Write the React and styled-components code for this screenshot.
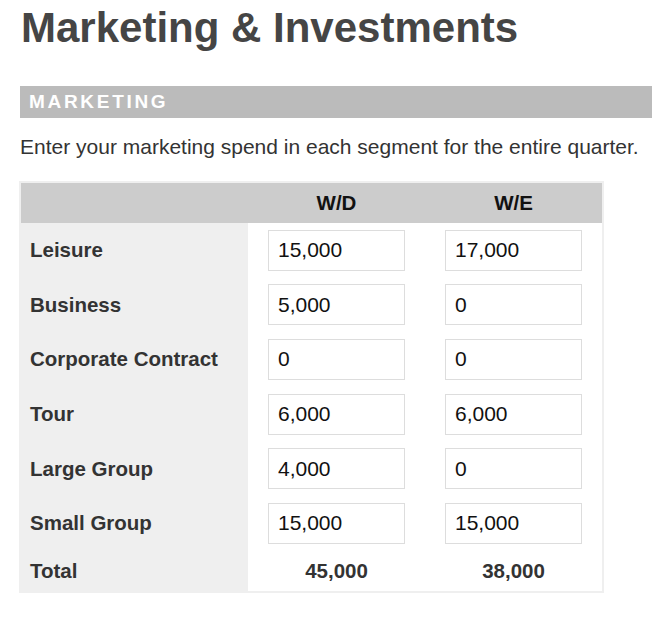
import React from 'react';
import styled, { createGlobalStyle } from 'styled-components';

// marketing spend page

const GlobalStyle = createGlobalStyle`
  html, body {
    margin: 0;
    padding: 0;
    background: #fff;
  }
  body {
    font-family: "Liberation Sans", Arial, Helvetica, sans-serif;
  }
`;

const Page = styled.div`
  padding: 3px 2px 24px 20px;
`;

const Title = styled.h1`
  margin: 0;
  font-size: 42px;
  line-height: 50px;
  font-weight: 700;
  color: #454545;
  padding-left: 1px;
`;

const SectionBar = styled.div`
  margin-top: 33px;
  height: 32px;
  line-height: 32px;
  background: #bbbbbb;
  color: #fff;
  font-size: 19px;
  font-weight: 700;
  letter-spacing: 2.7px;
  padding-left: 9px;
`;

const Intro = styled.p`
  margin: 17px 0 0;
  font-size: 21px;
  line-height: 24px;
  color: #333;
`;

const Grid = styled.div`
  display: grid;
  grid-template-columns: 227px 177px 177px;
  width: fit-content;
  margin: 22px 0 0 -1px;
  border: 2px solid #efefef;
`;

const HeadCell = styled.div`
  height: 40px;
  background: #cccccc;
  display: flex;
  align-items: center;
  justify-content: center;
  font-size: 20.5px;
  font-weight: 700;
  color: #111;
`;

const LabelCell = styled.div`
  height: ${(p) => (p.$total ? 40 : 54.6)}px;
  background: #efefef;
  display: flex;
  align-items: center;
  padding-left: 9px;
  font-size: 20.5px;
  font-weight: 700;
  color: #333;
`;

const ValueCell = styled.div`
  height: ${(p) => (p.$total ? 40 : 54.6)}px;
  display: flex;
  align-items: center;
  justify-content: center;
  font-size: 20.5px;
  font-weight: ${(p) => (p.$total ? 700 : 400)};
  color: #333;
`;

const Input = styled.input`
  box-sizing: border-box;
  width: 137px;
  height: 41px;
  border: 1px solid #dddddd;
  border-radius: 0;
  padding: 0 0 0 9px;
  margin: 0;
  font-family: "Liberation Sans", Arial, sans-serif;
  font-size: 21px;
  color: #111;
  background: #fff;
  outline: none;
`;

const rows = [
  { label: 'Leisure', wd: '15,000', we: '17,000' },
  { label: 'Business', wd: '5,000', we: '0' },
  { label: 'Corporate Contract', wd: '0', we: '0' },
  { label: 'Tour', wd: '6,000', we: '6,000' },
  { label: 'Large Group', wd: '4,000', we: '0' },
  { label: 'Small Group', wd: '15,000', we: '15,000' },
];

export default function App() {
  return (
    <Page>
      <GlobalStyle />
      <Title>Marketing &amp; Investments</Title>
      <SectionBar>MARKETING</SectionBar>
      <Intro>Enter your marketing spend in each segment for the entire quarter.</Intro>
      <Grid>
        <HeadCell />
        <HeadCell>W/D</HeadCell>
        <HeadCell>W/E</HeadCell>
        {rows.map((r) => (
          <React.Fragment key={r.label}>
            <LabelCell>{r.label}</LabelCell>
            <ValueCell>
              <Input defaultValue={r.wd} />
            </ValueCell>
            <ValueCell>
              <Input defaultValue={r.we} />
            </ValueCell>
          </React.Fragment>
        ))}
        <LabelCell $total>Total</LabelCell>
        <ValueCell $total>45,000</ValueCell>
        <ValueCell $total>38,000</ValueCell>
      </Grid>
    </Page>
  );
}
